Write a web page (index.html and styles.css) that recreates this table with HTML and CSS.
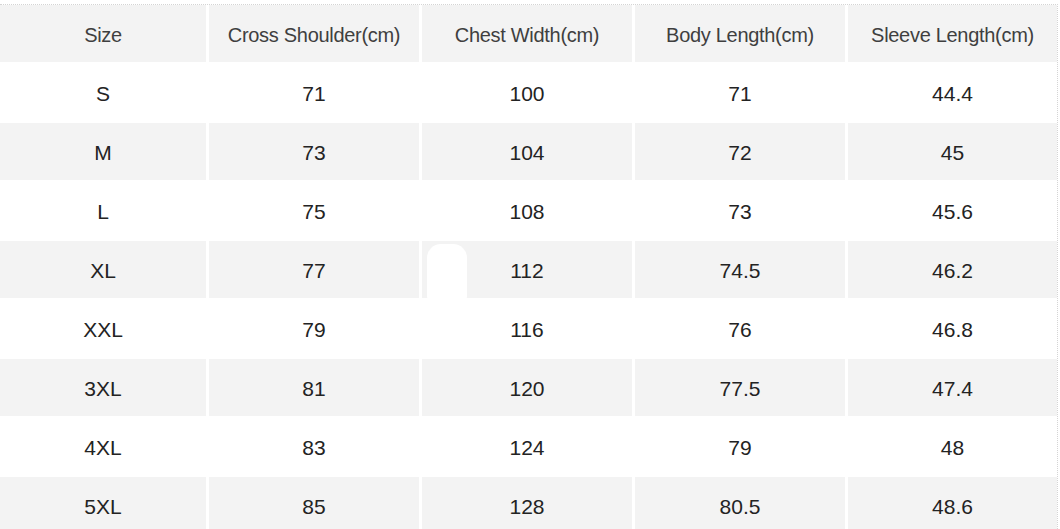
FILE: index.html
```html
<!DOCTYPE html>
<html>
<head>
<meta charset="utf-8">
<link rel="stylesheet" href="styles.css">
</head>
<body>
<div class="sheet">
  <div class="table">
    <div class="cell head">Size</div>
    <div class="cell head">Cross Shoulder(cm)</div>
    <div class="cell head">Chest Width(cm)</div>
    <div class="cell head">Body Length(cm)</div>
    <div class="cell head">Sleeve Length(cm)</div>

    <div class="cell">S</div><div class="cell">71</div><div class="cell">100</div><div class="cell">71</div><div class="cell">44.4</div>
    <div class="cell grey">M</div><div class="cell grey">73</div><div class="cell grey">104</div><div class="cell grey">72</div><div class="cell grey">45</div>
    <div class="cell">L</div><div class="cell">75</div><div class="cell">108</div><div class="cell">73</div><div class="cell">45.6</div>
    <div class="cell grey">XL</div><div class="cell grey">77</div><div class="cell grey blobcell">112<span class="blob"></span></div><div class="cell grey">74.5</div><div class="cell grey">46.2</div>
    <div class="cell">XXL</div><div class="cell">79</div><div class="cell">116</div><div class="cell">76</div><div class="cell">46.8</div>
    <div class="cell grey">3XL</div><div class="cell grey">81</div><div class="cell grey">120</div><div class="cell grey">77.5</div><div class="cell grey">47.4</div>
    <div class="cell">4XL</div><div class="cell">83</div><div class="cell">124</div><div class="cell">79</div><div class="cell">48</div>
    <div class="cell grey">5XL</div><div class="cell grey">85</div><div class="cell grey">128</div><div class="cell grey">80.5</div><div class="cell grey">48.6</div>
  </div>
</div>
</body>
</html>
```
FILE: styles.css
```css
html, body {
  margin: 0;
  padding: 0;
  background: #ffffff;
}
body {
  font-family: "Liberation Sans", Arial, sans-serif;
  overflow: hidden;
  height: 529px;
}
.sheet {
  margin-top: 4px;
  width: 1057px;
  border-top: 1px dotted #d4d4d4;
  border-right: 1px dotted #d4d4d4;
  border-bottom: 1px dotted #d4d4d4;
}
.table {
  display: grid;
  grid-template-columns: 206px 210px 210px 210px 209px;
  grid-auto-rows: 57px;
  column-gap: 3px;
  row-gap: 2px;
}
.cell {
  display: flex;
  align-items: center;
  justify-content: center;
  padding-top: 3px;
  box-sizing: border-box;
  font-size: 21px;
  color: #232323;
  background: #ffffff;
}
.head {
  font-size: 20px;
  color: #3f3f3f;
  letter-spacing: -0.3px;
  background: #f3f3f3;
}
.grey {
  background: #f3f3f3;
}
.blobcell {
  position: relative;
}
.blob {
  position: absolute;
  left: 5px;
  top: 3px;
  width: 40px;
  height: 56px;
  background: #ffffff;
  border-radius: 14px 14px 4px 4px;
}
```
